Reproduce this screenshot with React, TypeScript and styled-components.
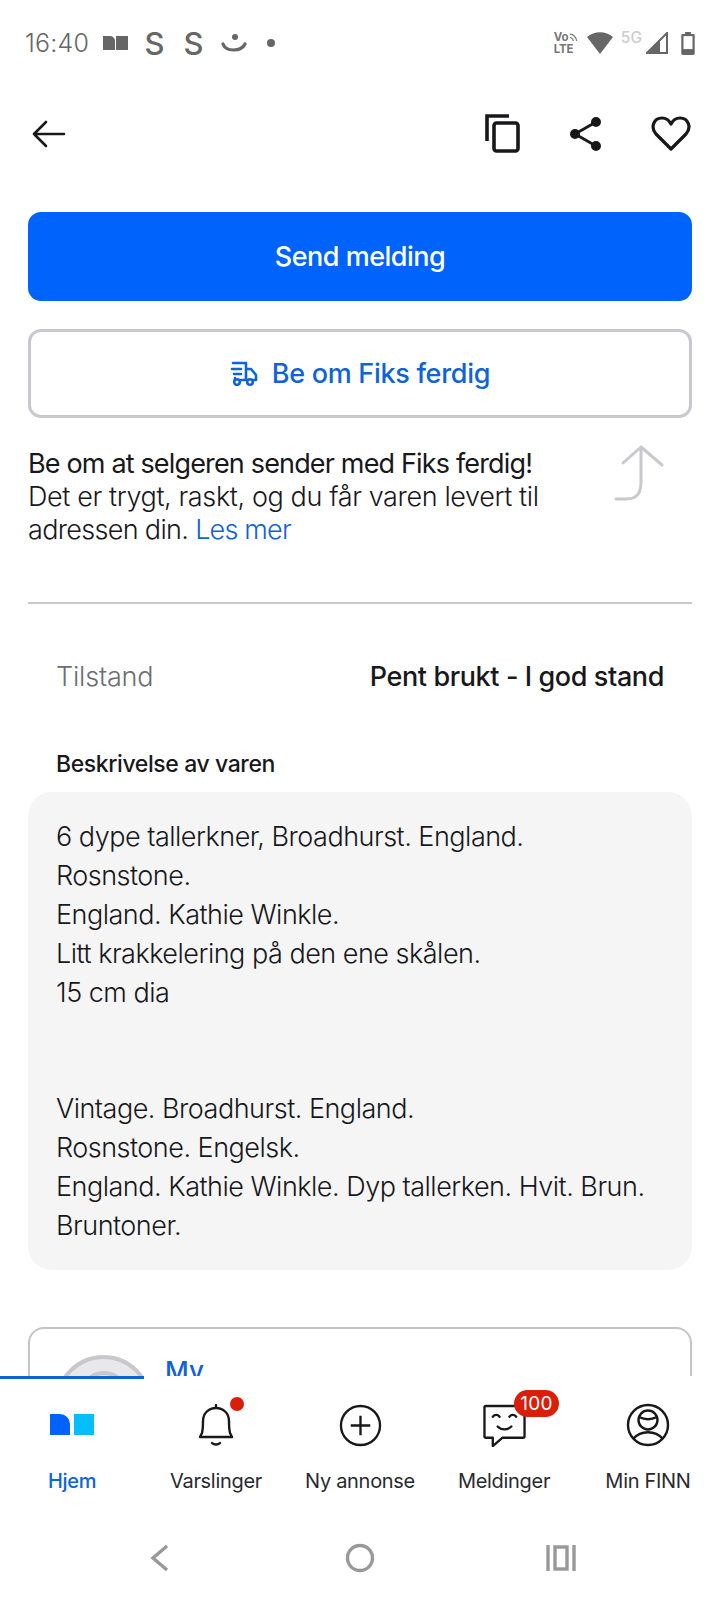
import React from "react";
import styled, { createGlobalStyle } from "styled-components";

const Global = createGlobalStyle`
  html, body { margin: 0; padding: 0; background: #fff; }
  body { font-family: Inter, "Noto Sans", sans-serif; }
  * { box-sizing: border-box; }
`;
const Page = styled.div`
  width: 720px; height: 1600px; display: flex; flex-direction: column; overflow: hidden; background: #fff; color: #18181b;
`;
const StatusBar = styled.div`
  height: 86px; flex: none; display: flex; align-items: center; justify-content: space-between; padding: 0 25px 0 25px; color: #666;
`;
const StatusGroup = styled.div`display: flex; align-items: center;`;
const Clock = styled.span`font-size: 25px; font-weight: 300; letter-spacing: 0.2px; color: #666; width: 78px;`;
const Toolbar = styled.div`
  height: 94px; flex: none; display: flex; align-items: center; justify-content: space-between; padding: 2px 29px 0 31px;
`;
const ToolIcons = styled.div`display: flex; align-items: center; gap: 48px;`;
const Scroll = styled.div`flex: 1; min-height: 0; overflow: hidden; padding: 32px 28px 0;`;
const PrimaryButton = styled.div`
  height: 89px; border-radius: 13px; background: #0063fb; color: #fff; display: flex; align-items: center; justify-content: center;
  font-size: 27px; font-weight: 500; letter-spacing: -0.5px;
`;
const SecondaryButton = styled.div`
  margin-top: 28px; height: 89px; border-radius: 13px; border: 3px solid #c8c8ce; color: #0e63d8; display: flex; align-items: center; justify-content: center; gap: 14px;
  font-size: 27px; font-weight: 500; letter-spacing: -0.3px;
`;
const Promo = styled.div`margin-top: 29px; display: flex; justify-content: space-between; height: 106px;`;
const PromoText = styled.div`font-size: 27px; line-height: 33px; font-weight: 300;`;
const PromoTitle = styled.div`font-weight: 400; letter-spacing: -0.84px;`;
const PromoLine = styled.div<{ $spacing: number }>`letter-spacing: ${p => p.$spacing}px;`;
const Link = styled.span`color: #0e63d8; letter-spacing: -0.8px;`;
const PromoArrow = styled.div`padding: 0 26px 0 0; margin-top: -3px;`;
const Divider = styled.div`margin-top: 49px; height: 2px; background: #c9c9cd;`;
const Condition = styled.div`
  margin-top: 54px; display: flex; justify-content: space-between; padding: 0 28px; font-size: 27px; line-height: 38px;
`;
const ConditionLabel = styled.span`color: #6d6d72; font-weight: 300; letter-spacing: -0.2px;`;
const ConditionValue = styled.span`font-weight: 500; letter-spacing: -0.4px;`;
const SectionLabel = styled.div`margin-top: 53px; padding: 0 28px; font-size: 23px; line-height: 30px; font-weight: 500; letter-spacing: -0.4px;`;
const Description = styled.div`
  margin-top: 13px; background: #f5f5f6; border-radius: 24px; padding: 26px 28px 25px; font-size: 27px; line-height: 38.9px; font-weight: 300; letter-spacing: -0.5px; height: 478px;
`;
const DescLine = styled.div`min-height: 38.9px;`;
const SellerCard = styled.div`
  margin-top: 57px; height: 200px; border: 2px solid #c4c4c8; border-radius: 16px; display: flex; gap: 13px; padding: 26px 25px;
`;
const Avatar = styled.div`
  width: 97px; height: 97px; border-radius: 50%; background: #e8e8ea; border: 4px solid #c8c8cc; flex: none; display: flex; justify-content: center; padding-top: 12px;
`;
const AvatarRing = styled.div`width: 50px; height: 50px; border-radius: 50%; border: 4px solid #c8c8cc;`;
const SellerName = styled.div`font-size: 26px; font-weight: 500; color: #0e63d8; line-height: 33px; margin-top: -1px;`;
const BottomNav = styled.nav`
  flex: none; height: 142px; background: #fff; display: grid; grid-template-columns: repeat(5, 144px); position: relative;
  &::before { content: ""; position: absolute; left: 0; top: 0; width: 144px; height: 3px; background: #0e63d8; }
`;
const NavItem = styled.div`display: flex; flex-direction: column; align-items: center; padding-top: 25px; position: relative;`;
const NavIcon = styled.div`height: 48px; width: 100%; display: flex; align-items: center; justify-content: center; position: relative;`;
const NavLabel = styled.div<{ $active?: boolean }>`
  margin-top: 19px; font-size: 20px; line-height: 26px; white-space: nowrap; letter-spacing: -0.3px; font-weight: ${p => p.$active ? 500 : 400}; color: ${p => p.$active ? "#0e63d8" : "#2a2a2e"};
`;
const Dot = styled.span`position: absolute; left: 86px; top: -4px; width: 14px; height: 14px; border-radius: 50%; background: #d91f0a;`;
const Count = styled.span`
  position: absolute; left: 82px; top: -11px; width: 45px; height: 27px; border-radius: 14px; background: #d91f0a; color: #fff; font-size: 19px; display: flex; align-items: center; justify-content: center; letter-spacing: 0.3px;
`;
const SystemNav = styled.div`
  flex: none; height: 82px; display: grid; grid-template-columns: repeat(3, 1fr); padding: 0 58px 2px; place-items: center;
`;

const Back = () => (<svg width="36" height="30" viewBox="0 0 36 30" fill="none" stroke="#18181b" strokeWidth="2.6" strokeLinecap="round" strokeLinejoin="round"><path d="M3 15h30M15 3 3 15l12 12" /></svg>);
const Copy = () => (<svg width="36" height="40" viewBox="0 0 36 40" fill="none" stroke="#18181b" strokeWidth="3.6"><path d="M2 27V2h22" /><rect x="9" y="9" width="24" height="28" rx="2.5" /></svg>);
const Share = () => (<svg width="34" height="36" viewBox="0 0 34 36" fill="#18181b" stroke="#18181b" strokeWidth="2.8"><path d="M27 6 6 18l21 12" fill="none" /><circle cx="27" cy="6" r="3.6" /><circle cx="6" cy="18" r="3.6" /><circle cx="27" cy="30" r="3.6" /></svg>);
const Heart = () => (<svg width="40" height="36" viewBox="0 0 40 36" fill="none" stroke="#18181b" strokeWidth="3.2" strokeLinejoin="round"><path d="M20 33 5 18C-1 11 3 2 11 2c4 0 7 2 9 6 2-4 5-6 9-6 8 0 12 9 6 16L20 33Z" /></svg>);
const Truck = () => (<svg width="28" height="26" viewBox="0 0 28 26" fill="none" stroke="#0e63d8" strokeWidth="2.6" strokeLinecap="round" strokeLinejoin="round"><path d="M3 2h13v17h-5M2 8h9M4 13h7M16 8h5l5 6v5h-3M5 17v2" /><circle cx="7" cy="21" r="2.8" /><circle cx="20" cy="21" r="2.8" /></svg>);
const CurveArrow = () => (<svg width="52" height="58" viewBox="0 0 52 58" fill="none" stroke="#c8c8ce" strokeWidth="3" strokeLinecap="round" strokeLinejoin="round"><path d="M2 55h10c13 0 15-8 15-18V3M27 3 9 19M27 3l21 18" /></svg>);
const LogoSmall = () => (<svg width="25" height="14" viewBox="0 0 25 14" fill="#666"><path d="M0 0h7a5 5 0 0 1 5 5v9H0z" /><rect x="13" y="0" width="12" height="14" /></svg>);
const Smile = () => (<svg width="26" height="20" viewBox="0 0 26 20" fill="none"><circle cx="14" cy="4" r="3" fill="#666" /><path d="M2 11c3 8 18 8 22 0" stroke="#666" strokeWidth="3.2" strokeLinecap="round" /></svg>);
const StatusS = styled.span<{ $first?: boolean }>`font-size: 31px; font-weight: 500; color: #666; line-height: 1; width: 39px; text-align: center; margin-left: ${p => p.$first ? 7 : 0}px;`;
const SmileSlot = styled.span`display: flex; margin-left: 8px;`;
const SmallDot = styled.span`width: 8px; height: 8px; border-radius: 50%; background: #666; margin-left: 20px;`;
const Lte = styled.div`display: flex; flex-direction: column; font-size: 11.5px; line-height: 12px; font-weight: 700; color: #777; margin-right: 9px; letter-spacing: -0.2px; width: 24px;`;
const VoRow = styled.span`display: flex; align-items: center; gap: 1px;`;
const FiveG = styled.span`font-size: 15.5px; font-weight: 500; color: #ccc; margin: -12px 4px 0 8px;`;
const BatterySlot = styled.span`display: flex; margin-left: 13px;`;
const VoWaves = () => (<svg width="9" height="9" viewBox="0 0 10 10" fill="none" stroke="#777" strokeWidth="1.4"><path d="M1 1c4 0 8 4 8 8M1 5c2 0 4 2 4 4" /></svg>);
const Wifi = () => (<svg width="26" height="22" viewBox="0 0 26 22" fill="#666"><path d="M0 5c7-6.500 19-6.500 26 0L13 22Z" /></svg>);
const Signal = () => (<svg width="22" height="22" viewBox="0 0 22 22"><path d="M21 1v20H1Z" fill="#fff" stroke="#666" strokeWidth="2" /><path d="M14 7 1 21h13Z" fill="#666" /></svg>);
const Battery = () => (<svg width="14" height="23" viewBox="0 0 14 24"><path d="M4 0h6v2h2.500a1.500 1.500 0 0 1 1.500 1.500v19a1.500 1.500 0 0 1-1.500 1.500h-11A1.500 1.500 0 0 1 0 22.500v-19A1.500 1.500 0 0 1 1.500 2H4z" fill="#666" /><rect x="2.300" y="4.300" width="9.400" height="13.500" fill="#fff" /></svg>);
const HomeIcon = () => (<svg width="44" height="22" viewBox="0 0 44 22"><path d="M0 0h10a10 10 0 0 1 10 10v11H0z" fill="#0063fb" /><rect x="24" y="0" width="20" height="21" fill="#06befb" /></svg>);
const Bell = () => (<svg width="36" height="42" viewBox="0 0 36 42" fill="none" stroke="#18181b" strokeWidth="2.4" strokeLinecap="round" strokeLinejoin="round"><path d="M18 1v3M2 33h32l-2-4c-1-4-1-8-1-12C31 9 25 4 18 4S5 9 5 17c0 4 0 8-1 12zM14 39c2 2 6 2 8 0" /></svg>);
const Plus = () => (<svg width="43" height="43" viewBox="0 0 44 44" fill="none" stroke="#18181b" strokeWidth="2.4"><circle cx="22" cy="22" r="20" /><path d="M22 12v20M12 22h20" /></svg>);
const Chat = () => (<svg width="43" height="43" viewBox="0 0 44 44" fill="none" stroke="#18181b" strokeWidth="2.4" strokeLinecap="round" strokeLinejoin="round"><path d="M3 2h38a1.500 1.500 0 0 1 1.500 1.500V33a1.500 1.500 0 0 1-1.500 1.500H20L10 43v-8.500H3A1.500 1.500 0 0 1 1.500 33V3.500A1.500 1.500 0 0 1 3 2Z" /><path d="M10 13c2-2.500 5-2.500 7 0M27 13c2-2.500 5-2.500 7 0M15 23c4 4 10 4 14 0" /></svg>);
const Person = () => (<svg width="44" height="44" viewBox="0 0 44 44" fill="none" stroke="#18181b" strokeWidth="2.4"><circle cx="22" cy="22" r="20" /><ellipse cx="22" cy="17" rx="9.500" ry="9.500" /><path d="M13 14c6 3 12 3 18 0M7 36c8-9 22-9 30 0" /></svg>);
const NavBack = () => (<svg width="20" height="28" viewBox="0 0 20 28" fill="none" stroke="#999" strokeWidth="3.4"><path d="M18 2 4 14l14 12" /></svg>);
const NavHome = () => (<svg width="30" height="30" viewBox="0 0 30 30" fill="none" stroke="#999" strokeWidth="3.4"><circle cx="15" cy="15" r="12.500" /></svg>);
const NavRecent = () => (<svg width="30" height="26" viewBox="0 0 30 26" fill="none" stroke="#999" strokeWidth="3.400"><path d="M2 0v26M28 0v26" /><rect x="9" y="2" width="12" height="22" /></svg>);

const descriptionLines = [
  "6 dype tallerkner, Broadhurst. England.",
  "Rosnstone.",
  "England. Kathie Winkle.",
  "Litt krakkelering på den ene skålen.",
  "15 cm dia",
  "",
  "",
  "Vintage. Broadhurst. England.",
  "Rosnstone. Engelsk.",
  "England. Kathie Winkle. Dyp tallerken. Hvit. Brun.",
  "Bruntoner.",
];

export default function App() {
  return (
    <Page>
      <Global />
      <StatusBar>
        <StatusGroup>
          <Clock>16:40</Clock>
          <LogoSmall />
          <StatusS $first>S</StatusS>
          <StatusS>S</StatusS>
          <SmileSlot><Smile /></SmileSlot>
          <SmallDot />
        </StatusGroup>
        <StatusGroup>
          <Lte><VoRow>Vo<VoWaves /></VoRow><span>LTE</span></Lte>
          <Wifi />
          <FiveG>5G</FiveG>
          <Signal />
          <BatterySlot><Battery /></BatterySlot>
        </StatusGroup>
      </StatusBar>
      <Toolbar>
        <Back />
        <ToolIcons>
          <Copy />
          <Share />
          <Heart />
        </ToolIcons>
      </Toolbar>
      <Scroll>
        <PrimaryButton>Send melding</PrimaryButton>
        <SecondaryButton><Truck />Be om Fiks ferdig</SecondaryButton>
        <Promo>
          <PromoText>
            <PromoTitle>Be om at selgeren sender med Fiks ferdig!</PromoTitle>
            <PromoLine $spacing={-0.38}>Det er trygt, raskt, og du får varen levert til</PromoLine>
            <PromoLine $spacing={-0.68}>adressen din. <Link>Les mer</Link></PromoLine>
          </PromoText>
          <PromoArrow><CurveArrow /></PromoArrow>
        </Promo>
        <Divider />
        <Condition>
          <ConditionLabel>Tilstand</ConditionLabel>
          <ConditionValue>Pent brukt - I god stand</ConditionValue>
        </Condition>
        <SectionLabel>Beskrivelse av varen</SectionLabel>
        <Description>
          {descriptionLines.map((l, i) => <DescLine key={i}>{l}</DescLine>)}
        </Description>
        <SellerCard>
          <Avatar><AvatarRing /></Avatar>
          <SellerName>My</SellerName>
        </SellerCard>
      </Scroll>
      <BottomNav>
        <NavItem><NavIcon><HomeIcon /></NavIcon><NavLabel $active>Hjem</NavLabel></NavItem>
        <NavItem><NavIcon><Bell /><Dot /></NavIcon><NavLabel>Varslinger</NavLabel></NavItem>
        <NavItem><NavIcon><Plus /></NavIcon><NavLabel>Ny annonse</NavLabel></NavItem>
        <NavItem><NavIcon><Chat /><Count>100</Count></NavIcon><NavLabel>Meldinger</NavLabel></NavItem>
        <NavItem><NavIcon><Person /></NavIcon><NavLabel>Min FINN</NavLabel></NavItem>
      </BottomNav>
      <SystemNav>
        <NavBack />
        <NavHome />
        <NavRecent />
      </SystemNav>
    </Page>
  );
}
